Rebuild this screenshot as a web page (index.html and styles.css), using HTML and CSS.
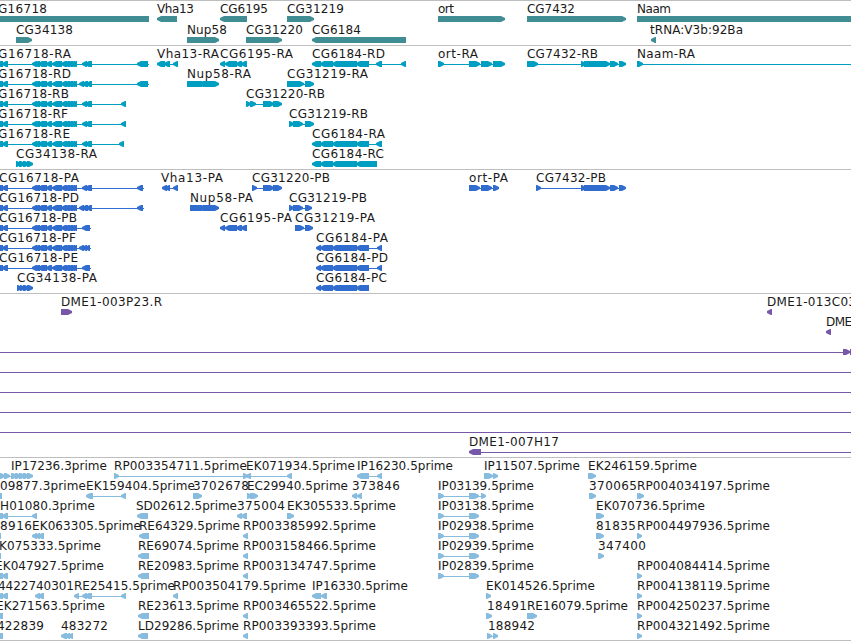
FILE: index.html
```html
<!DOCTYPE html>
<html lang="en">
<head>
<meta charset="utf-8">
<title>Genome tracks</title>
<link rel="stylesheet" href="styles.css">
</head>
<body>
<main class="tracks">
<section class="track genes" data-track="genes"></section>
<section class="track transcripts" data-track="transcripts"></section>
<section class="track proteins" data-track="proteins"></section>
<section class="track clones" data-track="clones"></section>
<section class="track ests" data-track="ests"></section>
</main>
<script src="tracks.js"></script>
</body>
</html>
```
FILE: styles.css
```css
body {
  margin: 0;
  background: #fff;
  overflow: hidden;
}

.tracks {
  display: flex;
  flex-direction: column;
  width: 851px;
  height: 641px;
  overflow: hidden;
}

.track {
  flex: none;
  box-sizing: border-box;
  border-top: 1px solid #bebebe;
  padding: 2px 0 1px;
}

.row {
  display: block;
  width: 851px;
  height: 20px;
  overflow: visible;
  fill: currentColor;
}

.row text {
  font-family: "DejaVu Sans", sans-serif;
  font-size: 12px;
  fill: #1a1a1a;
}

.genes { color: #408e94; padding-bottom: 0; }
.genes .row { height: 21px; }
.transcripts { color: #009fc1; }
.proteins { color: #316dcf; }
.clones { color: #7758a8; }
.ests { color: #87bcde; padding-bottom: 0; border-bottom: 1px solid #bebebe; }
```
FILE: tracks.js
```js
// Each row: a list of [label, start, end], then its glyphs.
// Glyphs: "<a,b" reverse exon, ">a,b" forward exon, "#a,b" block, "-a,b" intron line.
const exons = "<-4,3 <2,8 <32,37 <34,40 <38,47 <46,52 <52,62 <61,67 <64,70 <67,73 <70,75 <72,77 ";
const cg6184 = "<320,333 <332,357 ";
const cg7432 = ">581,586 >584,610 >610,618 >619,626 ";
const p = "RP00";

const tracks = {
  genes: [
    [[["G16718", -2, 47], ["Vha13", 157, 194], ["CG6195", 220, 268], ["CG31219", 287, 344], ["ort", 438, 454], ["CG7432", 527, 575], ["Naam", 637, 671]],
      "#0,149 <157,177 <220,247 >287,314 >438,505 >527,626 #637,851"],
    [[["CG34138", 16, 73], ["Nup58", 187, 227], ["CG31220", 246, 303], ["CG6184", 312, 361], ["tRNA:V3b:92Ba", 650, 743]],
      ">16,32 >187,219 >246,282 <312,406 <651,656"]
  ],
  transcripts: [
    [[["G16718-RA", -2, 71], ["Vha13-RA", 157, 219], ["CG6195-RA", 220, 293], ["CG6184-RD", 312, 385], ["ort-RA", 438, 478], ["CG7432-RB", 527, 598], ["Naam-RA", 637, 695]],
      "-0,149 " + exons + "<82,87 <85,92 <137,148 -157,178 <157,165 <164,170 <173,178 <220,225 <225,237 <236,242 <241,247 -312,406 <312,321 " + cg6184 + "<356,369 <376,382 <401,406 -438,505 >438,444 >469,480 >481,492 >493,505 -527,626 >527,538 " + cg7432 + "-637,851 >637,643"],
    [[["G16718-RD", -2, 71], ["Nup58-RA", 187, 251], ["CG31219-RA", 287, 368]],
      "-0,149 " + exons + "<79,84 <82,88 <86,92 <137,148 >187,206 #203,207 >206,219 -287,314 >287,304 >305,314"],
    [[["G16718-RB", -2, 69], ["CG31220-RB", 246, 325]],
      "-0,126 " + exons + "<82,87 <85,92 <121,126 -246,282 >246,251 >250,256 >263,274 >273,282"],
    [[["G16718-RF", -2, 68], ["CG31219-RB", 289, 368]],
      "-0,126 " + exons + "<82,87 <85,92 <121,126 -289,314 >289,294 >293,303 >305,314"],
    [[["G16718-RE", -2, 70], ["CG6184-RA", 312, 385]],
      "-0,124 " + exons + "<82,87 <85,92 <119,124 -312,382 <312,321 " + cg6184 + "<356,369 <376,382"],
    [[["CG34138-RA", 16, 97], ["CG6184-RC", 312, 384]],
      ">16,21 >19,25 >23,29 >27,33 <312,321 " + cg6184 + "<356,377"]
  ],
  proteins: [
    [[["CG16718-PA", -1, 79], ["Vha13-PA", 161, 223], ["CG31220-PB", 252, 330], ["ort-PA", 469, 508], ["CG7432-PB", 536, 606]],
      "-0,144 " + exons + "<82,87 <85,92 <137,143 -162,178 <162,167 <165,170 <173,178 -252,282 >252,257 >263,274 >273,282 -469,499 >469,480 >481,492 >493,499 -536,626 >536,541 " + cg7432],
    [[["CG16718-PD", -1, 79], ["Nup58-PA", 190, 253], ["CG31219-PB", 289, 367]],
      "-0,144 " + exons + "<79,84 <82,88 <86,92 <137,143 >190,206 #203,207 >206,219 -289,312 >289,294 >293,303 >305,312"],
    [[["CG16718-PB", -1, 77], ["CG6195-PA", 220, 292], ["CG31219-PA", 295, 375]],
      "-0,91 " + exons + "<82,90 <220,225 <225,237 <236,242 <241,247 -295,312 >295,304 >305,313"],
    [[["CG16718-PF", -1, 76], ["CG6184-PA", 316, 388]],
      "-0,91 " + exons + "<79,84 <82,87 <85,90 -316,382 <316,321 " + cg6184 + "<356,369 <377,382"],
    [[["CG16718-PE", -1, 78], ["CG6184-PD", 316, 388]],
      "-0,91 " + exons + "<82,90 -316,382 <316,321 " + cg6184 + "<356,369 <377,382"],
    [[["CG34138-PA", 17, 97], ["CG6184-PC", 316, 387]],
      ">17,22 >20,25 >23,29 >27,33 <316,321 " + cg6184 + "<356,369"]
  ],
  clones: [
    [[["DME1-003P23.R", 61, 162], ["DME1-013C03", 767, 856]], ">61,72 <767,772"],
    [[["DME", 826, 852]], "<826,831"],
    [[], "-0,851 >843,850 #850,851"],
    [[], "-0,851"],
    [[], "-0,851"],
    [[], "-0,851"],
    [[], "-0,851"],
    [[["DME1-007H17", 469, 559]], "-469,851 <469,481"]
  ],
  ests: [
    [[["IP17236.3prime", 11, 107], [p + "3354711.5prime", 114, 247], ["EK071934.5prime", 246, 355], ["IP16230.5prime", 357, 453], ["IP11507.5prime", 484, 580], ["EK246159.5prime", 588, 697]],
      "-0,33 >0,5 >4,10 >11,17 >15,21 >19,25 >23,29 >27,33 -114,292 >114,119 >243,248 <246,251 <287,292 -357,382 <357,369 <377,382 -484,498 >484,493 >493,498 >588,596"],
    [[["09877.3prime", 0, 86], ["EK159404.5prime", 86, 195], ["3702678", 193, 249], ["EC29940.5prime", 247, 348], ["373846", 352, 400], ["IP03139.5prime", 438, 534], ["370065", 589, 637], [p + "4034197.5prime", 637, 770]],
      "#0,2 -86,126 <86,93 <121,126 >193,202 >247,252 >250,258 <352,357 <357,362 -438,486 >438,444 >469,479 >481,486 >589,596 >637,642 >639,644"],
    [[["H01080.3prime", 0, 95], ["SD02612.5prime", 136, 237], ["375004", 237, 285], ["EK305533.5prime", 287, 396], ["IP03138.5prime", 438, 534], ["EK070736.5prime", 596, 705]],
      "-0,37 #0,3 <2,8 <32,37 <137,148 <237,242 <241,247 >287,294 -438,479 >438,444 >469,479 >596,604"],
    [[["8916", 0, 32], ["EK063305.5prime", 32, 141], ["RE64329.5prime", 139, 240], [p + "3385992.5prime", 243, 376], ["IP02938.5prime", 438, 534], ["81835", 596, 636], [p + "4497936.5prime", 637, 770]],
      "#0,1 <32,37 <35,40 <38,44 <139,149 <243,248 -438,479 >438,444 >469,479 >596,604 >637,642"],
    [[["K075333.5prime", -1, 101], ["RE69074.5prime", 138, 239], [p + "3158466.5prime", 243, 376], ["IP02939.5prime", 438, 534], ["347400", 598, 646]],
      "#0,1 <138,149 <243,248 -438,479 >438,444 >469,479 >598,604"],
    [[["EK047927.5prime", -5, 104], ["RE20983.5prime", 138, 239], [p + "3134747.5prime", 243, 376], ["IP02839.5prime", 438, 534], [p + "4084414.5prime", 637, 770]],
      "#0,3 <2,8 <138,149 <243,248 -438,479 >438,444 >469,479 >637,642"],
    [[["4422740301", -2, 74], ["RE25415.5prime", 74, 175], [p + "3504179.5prime", 173, 306], ["IP16330.5prime", 312, 408], ["EK014526.5prime", 486, 595], [p + "4138119.5prime", 637, 770]],
      "<-3,3 <2,8 <35,40 <38,44 -74,126 <74,79 <82,87 <85,92 <121,126 <173,178 <312,321 <321,327 >486,491 >637,642"],
    [[["EK271563.5prime", -4, 105], ["RE23613.5prime", 138, 239], [p + "3465522.5prime", 243, 376], ["18491", 487, 527], ["RE16079.5prime", 527, 628], [p + "4250237.5prime", 637, 770]],
      "#0,3 <138,149 <243,248 >486,492 >527,537 >637,642"],
    [[["422839", -3, 44], ["483272", 61, 108], ["LD29286.5prime", 138, 239], [p + "3393393.5prime", 243, 376], ["188942", 488, 535], [p + "4321492.5prime", 637, 770]],
      "#0,3 <61,67 <65,70 <68,73 <138,148 <243,248 -487,498 >487,492 >493,498 >637,642"]
  ]
};

function glyph(code) {
  const [a, b] = code.slice(1).split(",").map(Number);
  const head = Math.min(5, b - a);
  switch (code[0]) {
    case "-": return `<path d="M${a} 16H${b}v1H${a}z"/>`;
    case "#": return `<path d="M${a} 13H${b}v6H${a}z"/>`;
    case ">": return `<path d="M${a} 13H${b - head + 1}L${b} 15v2L${b - head + 1} 19H${a}z"/>`;
    default: return `<path d="M${b} 13H${a + head - 1}L${a} 15v2L${a + head - 1} 19H${b}z"/>`;
  }
}

for (const section of document.querySelectorAll(".track")) {
  section.innerHTML = tracks[section.dataset.track].map(([labels, glyphs]) =>
    `<svg class="row">${glyphs.trim().split(" ").map(glyph).join("")}${labels.map(([t, a, b]) =>
      `<text x="${a}" y="10" textLength="${b - a}">${t}</text>`).join("")}</svg>`).join("");
}
```
